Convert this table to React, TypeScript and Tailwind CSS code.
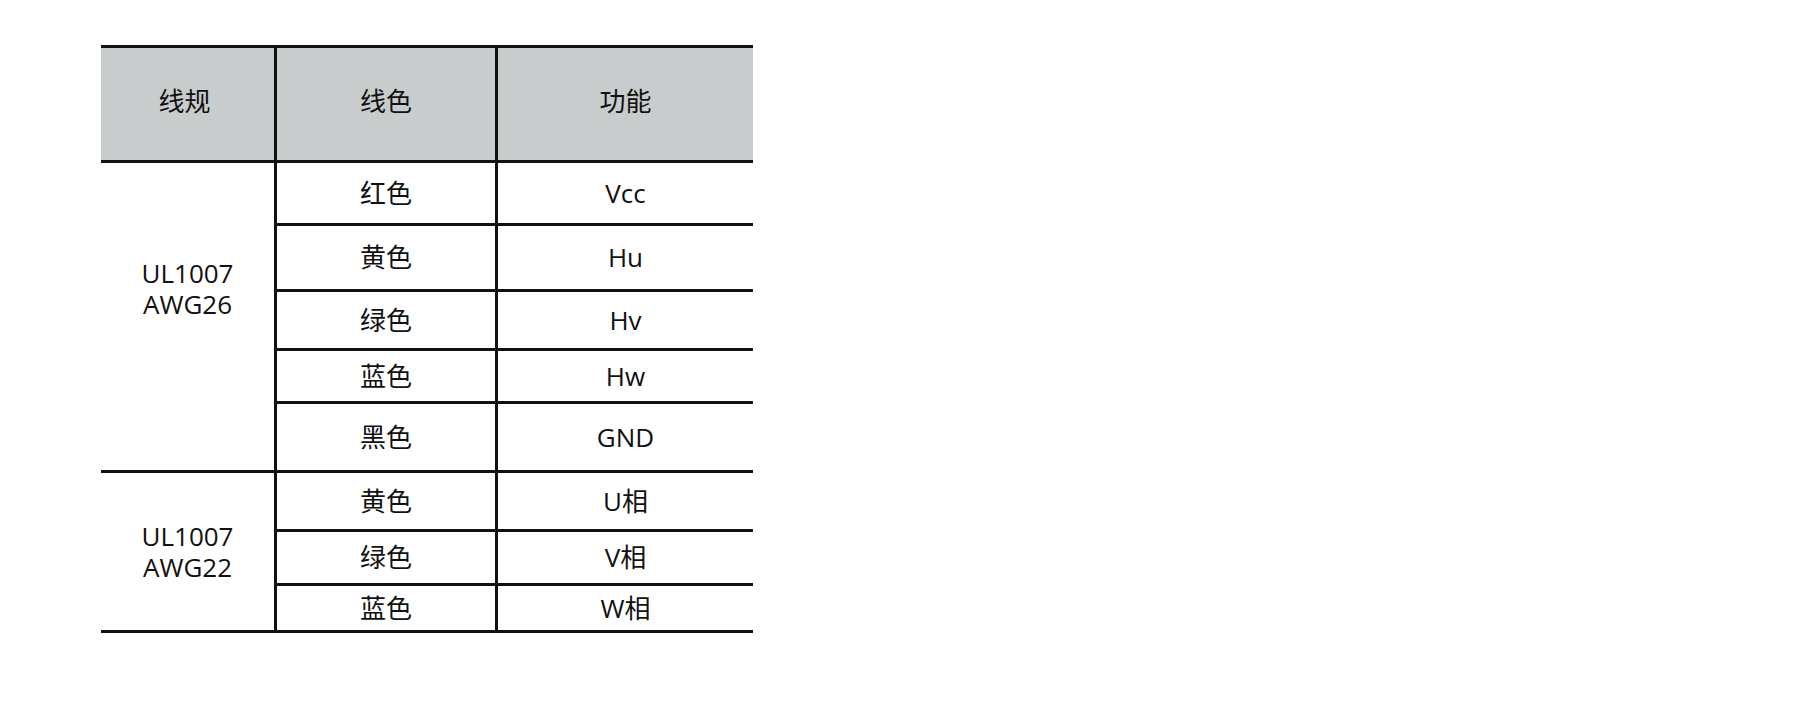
import React from "react";

const cell = "flex items-center justify-center border-b-[3px] border-[#111]";
const colL = "border-r-[3px]";

export default function App() {
  const g1 = [
    ["红色", "Vcc"],
    ["黄色", "Hu"],
    ["绿色", "Hv"],
    ["蓝色", "Hw"],
    ["黑色", "GND"],
  ];
  const g2 = [
    ["黄色", "U相"],
    ["绿色", "V相"],
    ["蓝色", "W相"],
  ];
  return (
    <div
      className="w-[1800px] h-[707px] bg-white overflow-hidden pt-[45px] pl-[101px] text-[26px] text-[#111]"
      style={{ fontFamily: '"Open Sans", "Noto Sans CJK SC", sans-serif' }}
    >
      <div className="grid w-[652px] grid-cols-[176px_221px_255px] grid-rows-[115px_63px_66px_59px_53px_69px_59px_54px_47px] border-t-[3px] border-[#111] leading-[31px]">
        <div className={`${cell} ${colL} bg-[#c9cccd] pb-[5px] pr-[6px]`}>线规</div>
        <div className={`${cell} ${colL} bg-[#c9cccd] pb-[5px]`}>线色</div>
        <div className={`${cell} bg-[#c9cccd] pb-[5px]`}>功能</div>

        <div className={`${cell} ${colL} row-span-5 flex-col pb-[56px] text-center`}>
          <span>UL1007</span>
          <span>AWG26</span>
        </div>
        {g1.map(([c, f], i) => (
          <React.Fragment key={"a" + i}>
            <div className={`${cell} ${colL} col-start-2`}>{c}</div>
            <div className={`${cell}`}>{f}</div>
          </React.Fragment>
        ))}

        <div className={`${cell} ${colL} row-span-3 flex-col text-center`}>
          <span>UL1007</span>
          <span>AWG22</span>
        </div>
        {g2.map(([c, f], i) => (
          <React.Fragment key={"b" + i}>
            <div className={`${cell} ${colL} col-start-2`}>{c}</div>
            <div className={`${cell}`}>{f}</div>
          </React.Fragment>
        ))}
      </div>
    </div>
  );
}
